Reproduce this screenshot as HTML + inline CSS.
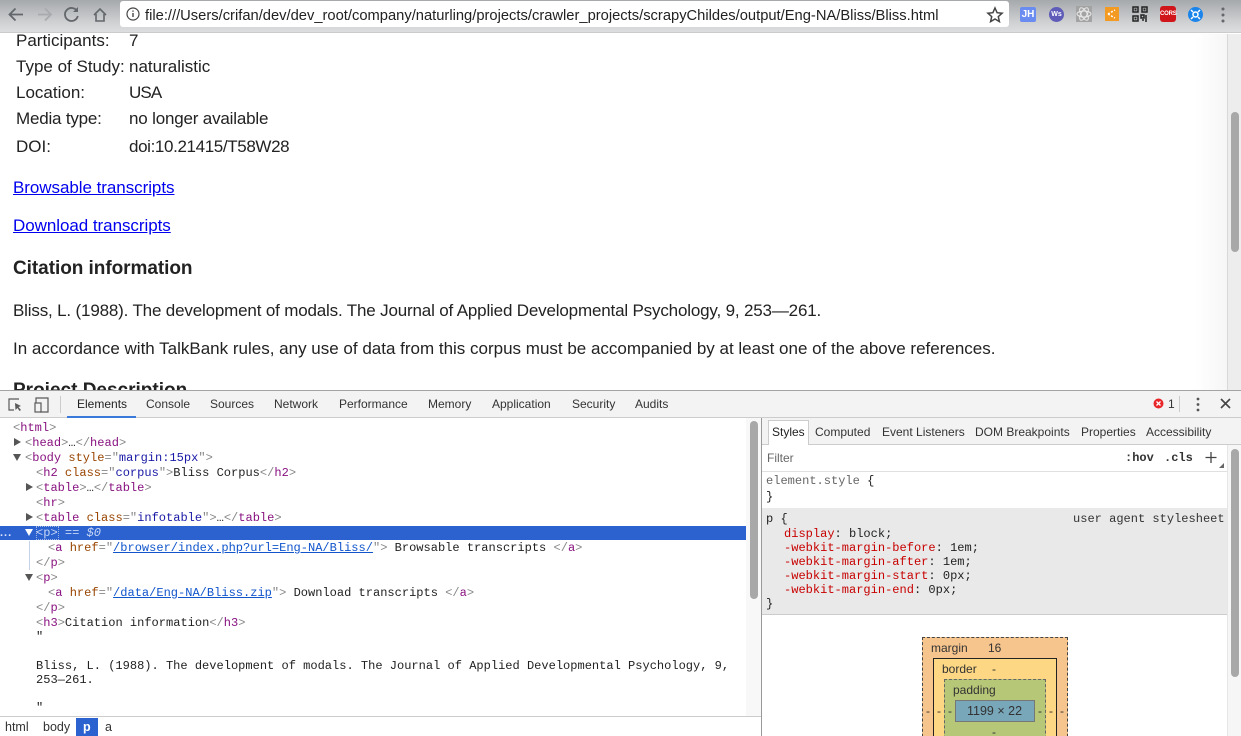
<!DOCTYPE html>
<html><head><meta charset="utf-8"><style>
html,body{margin:0;padding:0;width:1241px;height:736px;overflow:hidden;background:#fff}
body{position:relative;font-family:"Liberation Sans",sans-serif;color:#222;filter:blur(0.35px)}
.a{position:absolute;white-space:pre;line-height:1}
.box{position:absolute;box-sizing:border-box}
.p{font-size:17px;line-height:18px;color:#222}
.l{font-size:17px;line-height:18px;color:#0000ee;text-decoration:underline;letter-spacing:-.05px}
.m{font-family:"Liberation Mono",monospace;font-size:12.04px;color:#222;line-height:15px;height:15px;margin-top:1px}
.t{font-size:12px;color:#333}
.b{font-size:12px;color:#333}
.pu{color:#881280}.br{color:#994500}.bl{color:#1a1aa6}.gy{color:#888}
.u{color:#1155cc;text-decoration:underline}
.tri{position:absolute;width:0;height:0}
.tr{border-left:7px solid #555;border-top:4px solid transparent;border-bottom:4px solid transparent}
.td{border-top:7px solid #555;border-left:4px solid transparent;border-right:4px solid transparent}
</style></head><body>

<!-- browser toolbar -->
<div class="box" style="left:0;top:0;width:1241px;height:33px;background:linear-gradient(#a6a9ac,#cfd1d3 70%,#dcdee0);border-bottom:1px solid #c9cbcd"></div>
<svg class="box" style="left:0;top:0" width="115" height="30" fill="none" stroke-width="1.800">
<path d="M23 14.500H10M15.500 8.500l-6 6 6 6" stroke="#63666a"/>
<path d="M38 14.500h13M45 8.500l6 6-6 6" stroke="#a8abae"/>
<path d="M77 11a6.500 6.500 0 1 0 .8 5" stroke="#63666a"/><path d="M78 7v5h-5" fill="#63666a" stroke="none"/>
<path d="M94 15l6-6 6 6M96 14v7h8v-7" stroke="#63666a" stroke-width="1.600"/>
</svg>
<div class="box" style="left:120px;top:1px;width:889px;height:26px;background:#fff;border-radius:3px"></div>
<svg class="box" style="left:125px;top:6px" width="16" height="16" fill="none"><circle cx="8" cy="8" r="6" stroke="#444" stroke-width="1.200"/><path d="M8 7v4M8 4.500v1.300" stroke="#444" stroke-width="1.400"/></svg>
<div class="a" style="left:145px;top:8px;font-size:14.720px;line-height:16px;color:#222">file:///Users/crifan/dev/dev_root/company/naturling/projects/crawler_projects/scrapyChildes/output/Eng-NA/Bliss/Bliss.html</div>
<svg class="box" style="left:986px;top:6px" width="18" height="18" fill="none"><path d="M9 2l2.100 4.700 5 .5-3.800 3.400 1.100 5L9 13l-4.400 2.600 1.100-5L1.900 7.200l5-.5z" stroke="#444" stroke-width="1.500"/></svg>
<!-- extensions -->
<div class="box" style="left:1020px;top:7px;width:16px;height:15px;background:#6a8cf0;border-radius:2px;color:#fff;font:bold 10px/15px 'Liberation Sans';text-align:center">JH</div>
<div class="box" style="left:1049px;top:7px;width:15px;height:15px;background:#5e5cb8;border-radius:50%;color:#fff;font:bold 7px/15px 'Liberation Sans';text-align:center">Ws</div>
<svg class="box" style="left:1076px;top:6px" width="16" height="16" fill="none" stroke="#e8e8e8"><rect width="16" height="16" fill="#a3a3a3" stroke="none"/><ellipse cx="8" cy="8" rx="7" ry="3"/><ellipse cx="8" cy="8" rx="7" ry="3" transform="rotate(60 8 8)"/><ellipse cx="8" cy="8" rx="7" ry="3" transform="rotate(120 8 8)"/></svg>
<svg class="box" style="left:1105px;top:7px" width="14" height="14"><rect width="14" height="14" fill="#f39a22"/><path d="M3 7L10 3M3 7l7 4" stroke="#fff" stroke-width="1.500" stroke-dasharray="2 1.500"/></svg>
<svg class="box" style="left:1132px;top:6px" width="16" height="16" fill="none" stroke="#222" stroke-width="1.500"><rect x="1" y="1" width="5" height="5"/><rect x="10" y="1" width="5" height="5"/><rect x="1" y="10" width="5" height="5"/><path d="M9 9h3v3h-3zM14 9v7M10 14h2" /><path d="M3 3h1v1H3zM12 3h1v1h-1zM3 12h1v1H3z" stroke-width="1"/></svg>
<div class="box" style="left:1160px;top:6px;width:16px;height:16px;background:#d0161b;border-radius:3px;color:#fff;font:bold 6px/16px 'Liberation Sans';text-align:center;letter-spacing:-.2px">CORS</div>
<svg class="box" style="left:1188px;top:7px" width="15" height="15" fill="none"><circle cx="7.500" cy="7.500" r="7.500" fill="#1a84ea"/><circle cx="7.500" cy="7.500" r="2.500" stroke="#fff" stroke-width="1.500"/><path d="M3 3l2 2M12 3l-2 2M3 12l2-2M12 12l-2-2" stroke="#fff" stroke-width="1.500"/></svg>
<svg class="box" style="left:1220px;top:7px" width="6" height="16" fill="#63666a"><circle cx="3" cy="2" r="1.500"/><circle cx="3" cy="8" r="1.500"/><circle cx="3" cy="14" r="1.500"/></svg>

<!-- page scrollbar -->
<div class="box" style="left:1195px;top:34px;width:32px;height:356px;background:linear-gradient(90deg,#fff,#f6f6f6)"></div>
<div class="box" style="left:1227px;top:34px;width:14px;height:356px;background:#ededed;border-left:1px solid #d8d8d8"></div>
<div class="box" style="left:1231px;top:112px;width:8px;height:140px;background:#a8a8a8;border-radius:4px"></div>

<!-- page content -->
<div class="a p" style="left:16px;top:32px">Participants:</div><div class="a p" style="left:129px;top:32px">7</div>
<div class="a p" style="left:16px;top:58px">Type of Study:</div><div class="a p" style="left:129px;top:58px">naturalistic</div>
<div class="a p" style="left:16px;top:84px">Location:</div><div class="a p" style="left:129px;top:84px;letter-spacing:-.9px">USA</div>
<div class="a p" style="left:16px;top:110px;letter-spacing:-.2px">Media type:</div><div class="a p" style="left:129px;top:110px;letter-spacing:-.18px">no longer available</div>
<div class="a p" style="left:16px;top:138px">DOI:</div><div class="a p" style="left:129px;top:138px;letter-spacing:-.37px">doi:10.21415/T58W28</div>
<div class="a l" style="left:13px;top:179px">Browsable transcripts</div>
<div class="a l" style="left:13px;top:217px">Download transcripts</div>
<div class="a" style="left:13px;top:259px;font-size:19px;line-height:20px;font-weight:bold;color:#222;letter-spacing:-.05px">Citation information</div>
<div class="a p" style="left:13px;top:302px;letter-spacing:-.17px">Bliss, L. (1988). The development of modals. The Journal of Applied Developmental Psychology, 9, 253—261.</div>
<div class="a p" style="left:13px;top:340px">In accordance with TalkBank rules, any use of data from this corpus must be accompanied by at least one of the above references.</div>
<div class="a" style="left:13px;top:381px;font-size:19px;line-height:20px;font-weight:bold;color:#222">Project Description</div>

<!-- devtools -->
<div class="box" style="left:0;top:390px;width:1241px;height:346px;background:#fff;border-top:1px solid #a3a3a3"></div>
<div class="box" style="left:0;top:391px;width:1241px;height:27px;background:#f3f3f3;border-bottom:1px solid #ccc"></div>
<svg class="box" style="left:6px;top:396px" width="44" height="18" fill="none" stroke="#5a5a5a" stroke-width="1.200"><path d="M13 3H3v11h5"/><path d="M9 7l6 3-2.500 1 2.500 3-1.500 1-2-3-2 2z" fill="#5a5a5a" stroke="none"/><path d="M30 7V2h12v14H34"/><rect x="29" y="7" width="6" height="9"/></svg>
<div class="box" style="left:60px;top:396px;width:1px;height:17px;background:#ccc"></div>
<div class="a t" style="left:77px;top:398px;color:#222">Elements</div>
<div class="box" style="left:67px;top:416px;width:69px;height:2px;background:#3879d9"></div>
<div class="a t" style="left:146px;top:398px">Console</div>
<div class="a t" style="left:210px;top:398px">Sources</div>
<div class="a t" style="left:274px;top:398px">Network</div>
<div class="a t" style="left:339px;top:398px">Performance</div>
<div class="a t" style="left:428px;top:398px">Memory</div>
<div class="a t" style="left:492px;top:398px">Application</div>
<div class="a t" style="left:572px;top:398px">Security</div>
<div class="a t" style="left:635px;top:398px">Audits</div>
<svg class="box" style="left:1153px;top:398px" width="11" height="11"><circle cx="5.500" cy="5.500" r="5" fill="#e8262a"/><path d="M3.500 3.500l4 4M7.500 3.500l-4 4" stroke="#fff" stroke-width="1.300"/></svg>
<div class="a" style="left:1168px;top:398px;font-size:12px;color:#333">1</div>
<div class="box" style="left:1179px;top:396px;width:1px;height:16px;background:#ccc"></div>
<svg class="box" style="left:1195px;top:397px" width="6" height="15" fill="#555"><circle cx="3" cy="2" r="1.400"/><circle cx="3" cy="7.500" r="1.400"/><circle cx="3" cy="13" r="1.400"/></svg>
<svg class="box" style="left:1220px;top:398px" width="11" height="11"><path d="M1 1l9 9M10 1l-9 9" stroke="#444" stroke-width="1.600"/></svg>

<!-- elements tree -->
<div class="box" style="left:0;top:526px;width:746px;height:14px;background:#2b62d0"></div>
<div class="box" style="left:36px;top:526px;width:23px;height:14px;border:1px dotted #9fb5e5"></div>
<div class="a m gy" style="left:13px;top:420px"><span class="gy">&lt;</span><span class="pu">html</span><span class="gy">&gt;</span></div>
<div class="tri tr" style="left:14px;top:438px"></div>
<div class="a m" style="left:25px;top:435px"><span class="gy">&lt;</span><span class="pu">head</span><span class="gy">&gt;</span>…<span class="gy">&lt;/</span><span class="pu">head</span><span class="gy">&gt;</span></div>
<div class="tri td" style="left:13px;top:454px"></div>
<div class="a m" style="left:25px;top:450px"><span class="gy">&lt;</span><span class="pu">body</span> <span class="br">style</span><span class="gy">="</span><span class="bl">margin:15px</span><span class="gy">"&gt;</span></div>
<div class="a m" style="left:36px;top:465px"><span class="gy">&lt;</span><span class="pu">h2</span> <span class="br">class</span><span class="gy">="</span><span class="bl">corpus</span><span class="gy">"&gt;</span>Bliss Corpus<span class="gy">&lt;/</span><span class="pu">h2</span><span class="gy">&gt;</span></div>
<div class="tri tr" style="left:26px;top:483px"></div>
<div class="a m" style="left:36px;top:480px"><span class="gy">&lt;</span><span class="pu">table</span><span class="gy">&gt;</span>…<span class="gy">&lt;/</span><span class="pu">table</span><span class="gy">&gt;</span></div>
<div class="a m" style="left:36px;top:495px"><span class="gy">&lt;</span><span class="pu">hr</span><span class="gy">&gt;</span></div>
<div class="tri tr" style="left:26px;top:513px"></div>
<div class="a m" style="left:36px;top:510px"><span class="gy">&lt;</span><span class="pu">table</span> <span class="br">class</span><span class="gy">="</span><span class="bl">infotable</span><span class="gy">"&gt;</span>…<span class="gy">&lt;/</span><span class="pu">table</span><span class="gy">&gt;</span></div>
<div class="a" style="left:0;top:528px;font-size:11px;font-weight:bold;color:#dde6fa;letter-spacing:1px">...</div>
<div class="tri td" style="left:25px;top:529px;border-top-color:#fff"></div>
<div class="a m" style="left:36px;top:525px;color:#c8d6f4">&lt;p&gt; == <i>$0</i></div>
<div class="box" style="left:29px;top:541px;width:1px;height:29px;background:#c5d2ea"></div>
<div class="a m" style="left:48px;top:540px"><span class="gy">&lt;</span><span class="pu">a</span> <span class="br">href</span><span class="gy">="</span><span class="u">/browser/index.php?url=Eng-NA/Bliss/</span><span class="gy">"&gt;</span> Browsable transcripts <span class="gy">&lt;/</span><span class="pu">a</span><span class="gy">&gt;</span></div>
<div class="a m" style="left:36px;top:555px"><span class="gy">&lt;/</span><span class="pu">p</span><span class="gy">&gt;</span></div>
<div class="tri td" style="left:25px;top:574px"></div>
<div class="a m" style="left:36px;top:570px"><span class="gy">&lt;</span><span class="pu">p</span><span class="gy">&gt;</span></div>
<div class="a m" style="left:48px;top:585px"><span class="gy">&lt;</span><span class="pu">a</span> <span class="br">href</span><span class="gy">="</span><span class="u">/data/Eng-NA/Bliss.zip</span><span class="gy">"&gt;</span> Download transcripts <span class="gy">&lt;/</span><span class="pu">a</span><span class="gy">&gt;</span></div>
<div class="a m" style="left:36px;top:600px"><span class="gy">&lt;/</span><span class="pu">p</span><span class="gy">&gt;</span></div>
<div class="a m" style="left:36px;top:615px"><span class="gy">&lt;</span><span class="pu">h3</span><span class="gy">&gt;</span>Citation information<span class="gy">&lt;/</span><span class="pu">h3</span><span class="gy">&gt;</span></div>
<div class="a m" style="left:36px;top:629px">"</div>
<div class="a m" style="left:36px;top:658px">Bliss, L. (1988). The development of modals. The Journal of Applied Developmental Psychology, 9,</div>
<div class="a m" style="left:36px;top:672px">253—261.</div>
<div class="a m" style="left:36px;top:700px">"</div>

<!-- elements scrollbar + divider -->
<div class="box" style="left:746px;top:418px;width:15px;height:298px;background:#f8f8f8"></div>
<div class="box" style="left:750px;top:421px;width:8px;height:178px;background:#a8a8a8;border-radius:4px"></div>
<div class="box" style="left:761px;top:418px;width:1px;height:318px;background:#999"></div>

<!-- breadcrumb -->
<div class="box" style="left:0;top:716px;width:761px;height:20px;background:#fff;border-top:1px solid #ccc"></div>
<div class="box" style="left:76px;top:718px;width:22px;height:18px;background:#2b62d0"></div>
<div class="a" style="left:5px;top:721px;font-size:12.500px;color:#333">html</div>
<div class="a" style="left:43px;top:721px;font-size:12.500px;color:#333">body</div>
<div class="a" style="left:83px;top:721px;font-size:12.500px;font-weight:bold;color:#fff">p</div>
<div class="a" style="left:105px;top:721px;font-size:12.500px;color:#333">a</div>

<!-- styles sidebar -->
<div class="box" style="left:762px;top:418px;width:479px;height:27px;background:#f3f3f3;border-bottom:1px solid #ccc"></div>
<div class="box" style="left:768px;top:420px;width:41px;height:25px;background:#fff;border:1px solid #ccc;border-bottom:none"></div>
<div class="a t" style="left:772px;top:426px;color:#222">Styles</div>
<div class="a t" style="left:815px;top:426px">Computed</div>
<div class="a t" style="left:882px;top:426px">Event Listeners</div>
<div class="a t" style="left:975px;top:426px">DOM Breakpoints</div>
<div class="a t" style="left:1081px;top:426px">Properties</div>
<div class="a t" style="left:1146px;top:426px">Accessibility</div>
<div class="a" style="left:767px;top:452px;font-size:12px;color:#666">Filter</div>
<div class="a" style="left:1125px;top:451px;font:bold 12px 'Liberation Mono',monospace;color:#333">:hov</div>
<div class="a" style="left:1164px;top:451px;font:bold 12px 'Liberation Mono',monospace;color:#333">.cls</div>
<svg class="box" style="left:1204px;top:451px" width="20" height="18"><path d="M7 1v11M1.500 6.500h11" stroke="#444" stroke-width="1.300"/><path d="M15 17h5v-5z" fill="#666"/></svg>
<div class="box" style="left:762px;top:471px;width:465px;height:1px;background:#e0e0e0"></div>
<div class="a m" style="left:766px;top:473px;color:#666">element.style <span style="color:#222">{</span></div>
<div class="a m" style="left:766px;top:489px">}</div>
<div class="box" style="left:762px;top:508px;width:465px;height:107px;background:#e9e9e9;border-bottom:1px solid #ccc"></div>
<div class="a m" style="left:766px;top:511px">p {</div>
<div class="a m" style="left:1073px;top:511px;color:#333">user agent stylesheet</div>
<div class="a m" style="left:784px;top:526px"><span style="color:#c80000">display</span>: block;</div>
<div class="a m" style="left:784px;top:540px"><span style="color:#c80000">-webkit-margin-before</span>: 1em;</div>
<div class="a m" style="left:784px;top:554px"><span style="color:#c80000">-webkit-margin-after</span>: 1em;</div>
<div class="a m" style="left:784px;top:568px"><span style="color:#c80000">-webkit-margin-start</span>: 0px;</div>
<div class="a m" style="left:784px;top:582px"><span style="color:#c80000">-webkit-margin-end</span>: 0px;</div>
<div class="a m" style="left:766px;top:596px">}</div>
<div class="box" style="left:1227px;top:445px;width:14px;height:291px;background:#f6f6f6;border-left:1px solid #e6e6e6"></div>
<div class="box" style="left:1231px;top:449px;width:8px;height:228px;background:#a8a8a8;border-radius:4px"></div>

<!-- box model -->
<div class="box" style="left:922px;top:637px;width:146px;height:110px;background:#f6c48d;border:1px dashed #444"></div>
<div class="box" style="left:933px;top:658px;width:124px;height:90px;background:#fdd784;border:1px solid #222"></div>
<div class="box" style="left:944px;top:679px;width:102px;height:70px;background:#b7c778;border:1px dashed #666"></div>
<div class="box" style="left:955px;top:700px;width:80px;height:22px;background:#78a7ba;border:1px solid #777"></div>
<div class="a b" style="left:931px;top:642px">margin</div>
<div class="a b" style="left:988px;top:642px">16</div>
<div class="a b" style="left:942px;top:663px">border</div>
<div class="a b" style="left:992px;top:663px">-</div>
<div class="a b" style="left:953px;top:684px">padding</div>
<div class="a b" style="left:967px;top:705px;font-size:12.500px">1199 × 22</div>
<div class="a b" style="left:926px;top:705px">-</div>
<div class="a b" style="left:937px;top:705px">-</div>
<div class="a b" style="left:948px;top:705px">-</div>
<div class="a b" style="left:1038px;top:705px">-</div>
<div class="a b" style="left:1049px;top:705px">-</div>
<div class="a b" style="left:1060px;top:705px">-</div>
<div class="a b" style="left:992px;top:726px">-</div>
</body></html>
